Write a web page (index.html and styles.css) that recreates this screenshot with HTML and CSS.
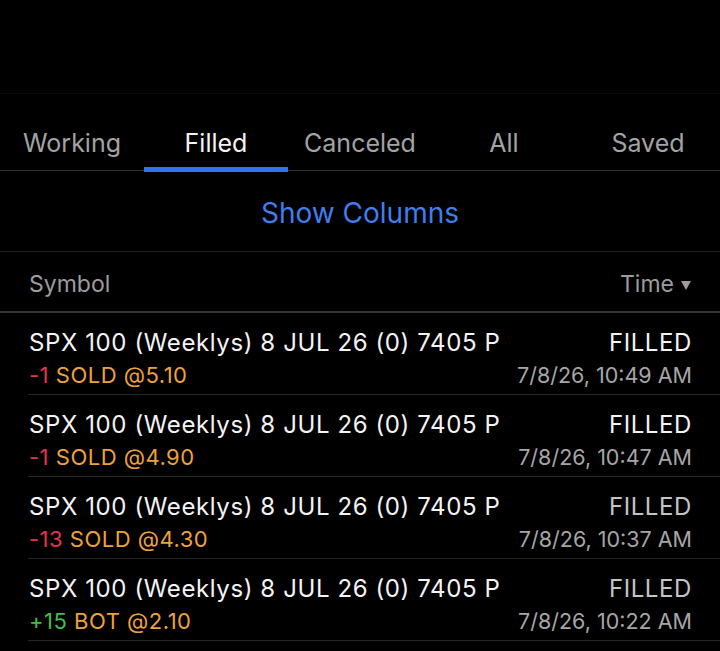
FILE: index.html
```html
<!DOCTYPE html>
<html lang="en">
<head>
  <meta charset="UTF-8" />
  <meta name="viewport" content="width=device-width, initial-scale=1" />
  <title>Orders</title>
  <link rel="stylesheet" href="styles.css">
</head>
<body>
  <div class="top-space"></div>

  <nav class="tabs">
    <a class="tab">Working</a>
    <a class="tab active">Filled</a>
    <a class="tab">Canceled</a>
    <a class="tab">All</a>
    <a class="tab">Saved</a>
  </nav>

  <div class="show-columns">Show Columns</div>

  <div class="list-header">
    <span>Symbol</span>
    <span class="sort">Time
      <svg class="caret" width="12" height="12" viewBox="0 0 12 12"><path d="M1 2h10L6 11z" fill="currentColor"/></svg>
    </span>
  </div>

  <ul class="orders">
    <li class="order">
      <div class="line">
        <span class="symbol">SPX 100 (Weeklys) 8 JUL 26 (0) 7405 P</span>
        <span class="status">FILLED</span>
      </div>
      <div class="line">
        <span class="fill"><span class="qty neg">-1</span> <span class="side">SOLD @5.10</span></span>
        <span class="time">7/8/26, 10:49 AM</span>
      </div>
    </li>
    <li class="order">
      <div class="line">
        <span class="symbol">SPX 100 (Weeklys) 8 JUL 26 (0) 7405 P</span>
        <span class="status">FILLED</span>
      </div>
      <div class="line">
        <span class="fill"><span class="qty neg">-1</span> <span class="side">SOLD @4.90</span></span>
        <span class="time">7/8/26, 10:47 AM</span>
      </div>
    </li>
    <li class="order">
      <div class="line">
        <span class="symbol">SPX 100 (Weeklys) 8 JUL 26 (0) 7405 P</span>
        <span class="status dim">FILLED</span>
      </div>
      <div class="line">
        <span class="fill"><span class="qty neg">-13</span> <span class="side">SOLD @4.30</span></span>
        <span class="time">7/8/26, 10:37 AM</span>
      </div>
    </li>
    <li class="order">
      <div class="line">
        <span class="symbol">SPX 100 (Weeklys) 8 JUL 26 (0) 7405 P</span>
        <span class="status dim">FILLED</span>
      </div>
      <div class="line">
        <span class="fill"><span class="qty pos">+15</span> <span class="side">BOT @2.10</span></span>
        <span class="time">7/8/26, 10:22 AM</span>
      </div>
    </li>
  </ul>
</body>
</html>
```

FILE: styles.css
```css
* {
  box-sizing: border-box;
}

body {
  margin: 0;
  background: #000;
  color: #f2f2f2;
  font-family: 'Inter', 'Roboto', sans-serif;
  overflow: hidden;
}

.top-space {
  height: 94px;
  border-bottom: 1px solid #0c0c0c;
}

.tabs {
  display: grid;
  grid-template-columns: repeat(5, 1fr);
  height: 77px;
  border-bottom: 1px solid #2e2e2e;
}

.tab {
  display: flex;
  align-items: center;
  justify-content: center;
  padding-top: 21px;
  font-size: 25px;
  color: #a3a3a3;
  position: relative;
}

.tab.active {
  color: #f4f4f4;
}

.tab.active::after {
  content: "";
  position: absolute;
  left: 0;
  right: 0;
  bottom: -2px;
  height: 5px;
  background: #3273f0;
}

.show-columns {
  height: 81px;
  display: flex;
  align-items: center;
  justify-content: center;
  padding-top: 4px;
  font-size: 28px;
  color: #3f7eee;
  border-bottom: 1px solid #1e1e1e;
}

.list-header {
  height: 61px;
  display: flex;
  justify-content: space-between;
  align-items: center;
  padding: 4px 28px 0 29px;
  font-size: 23px;
  color: #9c9c9c;
  border-bottom: 2px solid #353535;
}

.sort {
  display: flex;
  align-items: center;
  gap: 6px;
}

.caret {
  margin-top: 3px;
}

.orders {
  list-style: none;
  margin: 0;
  padding: 0 0 0 28px;
}

.order {
  height: 82px;
  padding: 15px 28px 0 1px;
  border-bottom: 1px solid #262626;
  display: flex;
  flex-direction: column;
  gap: 5px;
}

.line {
  display: flex;
  justify-content: space-between;
  align-items: baseline;
}

.symbol,
.status {
  font-size: 24px;
  letter-spacing: 0.6px;
  color: #f4f4f4;
}

.status.dim {
  color: #c4c4c4;
}

.fill {
  font-size: 22px;
  letter-spacing: 0.5px;
}

.time {
  font-size: 21.5px;
  color: #a6a6a6;
}

.qty.neg {
  color: #e5334a;
}

.qty.pos {
  color: #3fbf48;
}

.side {
  color: #eea23a;
}
```
